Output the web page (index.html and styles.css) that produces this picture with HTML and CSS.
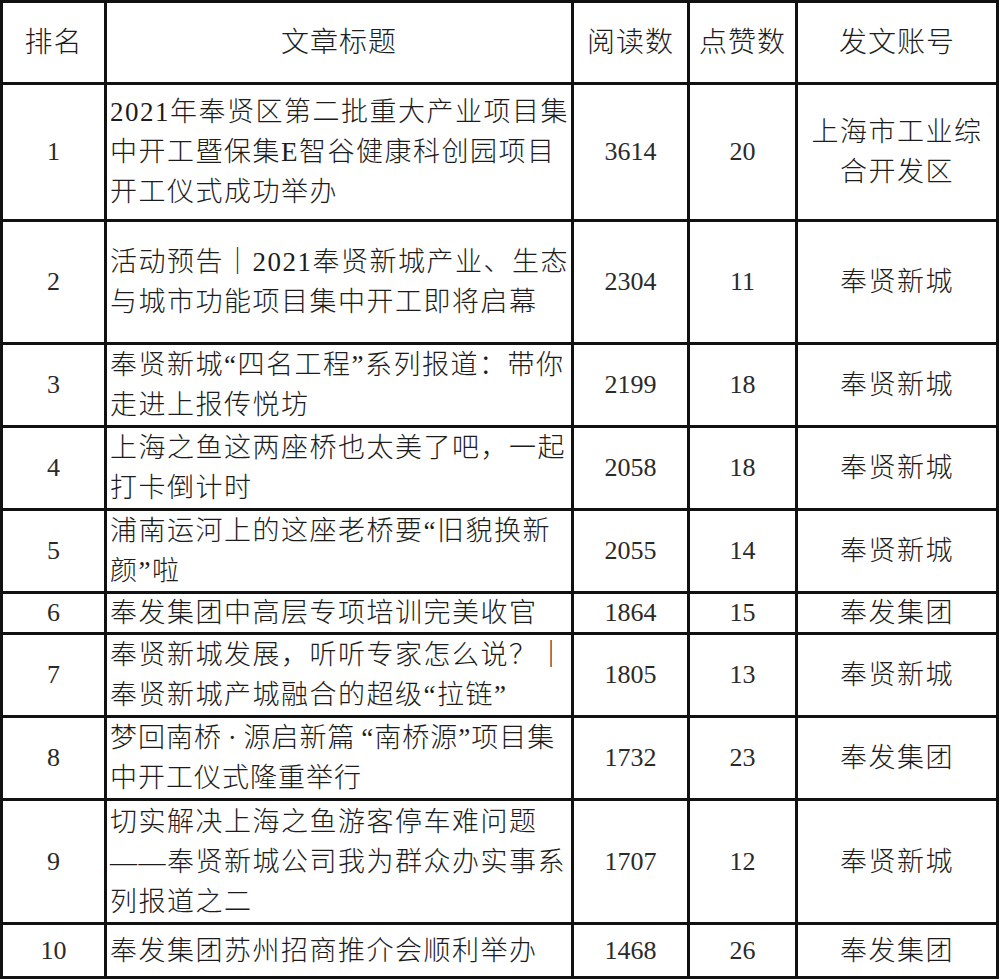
FILE: index.html
```html
<!DOCTYPE html>
<html lang="zh">
<head>
<meta charset="utf-8">
<link rel="stylesheet" href="styles.css">
</head>
<body>
<div class="table">
  <div class="cell head c">排名</div>
  <div class="cell head c">文章标题</div>
  <div class="cell head c">阅读数</div>
  <div class="cell head c">点赞数</div>
  <div class="cell head c">发文账号</div>

  <div class="cell c num">1</div>
  <div class="cell t">2021年奉贤区第二批重大产业项目集<br>中开工暨保集E智谷健康科创园项目<br>开工仪式成功举办</div>
  <div class="cell c num">3614</div>
  <div class="cell c num">20</div>
  <div class="cell c">上海市工业综<br>合开发区</div>

  <div class="cell c num">2</div>
  <div class="cell t">活动预告｜2021奉贤新城产业、生态<br>与城市功能项目集中开工即将启幕</div>
  <div class="cell c num">2304</div>
  <div class="cell c num">11</div>
  <div class="cell c">奉贤新城</div>

  <div class="cell c num">3</div>
  <div class="cell t">奉贤新城“四名工程”系列报道：带你<br>走进上报传悦坊</div>
  <div class="cell c num">2199</div>
  <div class="cell c num">18</div>
  <div class="cell c">奉贤新城</div>

  <div class="cell c num">4</div>
  <div class="cell t">上海之鱼这两座桥也太美了吧，一起<br>打卡倒计时</div>
  <div class="cell c num">2058</div>
  <div class="cell c num">18</div>
  <div class="cell c">奉贤新城</div>

  <div class="cell c num">5</div>
  <div class="cell t">浦南运河上的这座老桥要“旧貌换新<br>颜”啦</div>
  <div class="cell c num">2055</div>
  <div class="cell c num">14</div>
  <div class="cell c">奉贤新城</div>

  <div class="cell c num">6</div>
  <div class="cell t">奉发集团中高层专项培训完美收官</div>
  <div class="cell c num">1864</div>
  <div class="cell c num">15</div>
  <div class="cell c">奉发集团</div>

  <div class="cell c num">7</div>
  <div class="cell t">奉贤新城发展，听听专家怎么说？｜<br>奉贤新城产城融合的超级“拉链”</div>
  <div class="cell c num">1805</div>
  <div class="cell c num">13</div>
  <div class="cell c">奉贤新城</div>

  <div class="cell c num">8</div>
  <div class="cell t tight">梦回南桥 · 源启新篇 “南桥源”项目集<br>中开工仪式隆重举行</div>
  <div class="cell c num">1732</div>
  <div class="cell c num">23</div>
  <div class="cell c">奉发集团</div>

  <div class="cell c num">9</div>
  <div class="cell t">切实解决上海之鱼游客停车难问题<br>——奉贤新城公司我为群众办实事系<br>列报道之二</div>
  <div class="cell c num">1707</div>
  <div class="cell c num">12</div>
  <div class="cell c">奉贤新城</div>

  <div class="cell c num">10</div>
  <div class="cell t">奉发集团苏州招商推介会顺利举办</div>
  <div class="cell c num">1468</div>
  <div class="cell c num">26</div>
  <div class="cell c">奉发集团</div>
</div>
</body>
</html>
```

FILE: styles.css
```css
html, body {
  margin: 0;
  padding: 0;
  background: #ffffff;
}

.table {
  display: grid;
  grid-template-columns: 101px 464px 113px 105px 198px;
  grid-template-rows: 79px 134px 120px 80px 80px 80px 38px 80px 80px 121px 51px;
  gap: 3px;
  padding: 3px;
  width: 993px;
  background: #111111;
  font-family: "Liberation Serif", "Noto Sans CJK SC", serif;
  font-size: 27px;
  letter-spacing: 1.5px;
  line-height: 40px;
  color: #1c1c1c;
  font-weight: 300;
}

.cell {
  background: #ffffff;
  display: flex;
  align-items: center;
  white-space: nowrap;
  overflow: visible;
}

.c {
  justify-content: center;
  text-align: center;
}

.t {
  justify-content: flex-start;
  text-align: left;
  padding-left: 3px;
}

.tight {
  letter-spacing: 1px;
  word-spacing: -2px;
}

.num {
  font-size: 26px;
  letter-spacing: 0;
  color: #2a2a2a;
}

.head {
  font-size: 28px;
  letter-spacing: 1px;
}
```
